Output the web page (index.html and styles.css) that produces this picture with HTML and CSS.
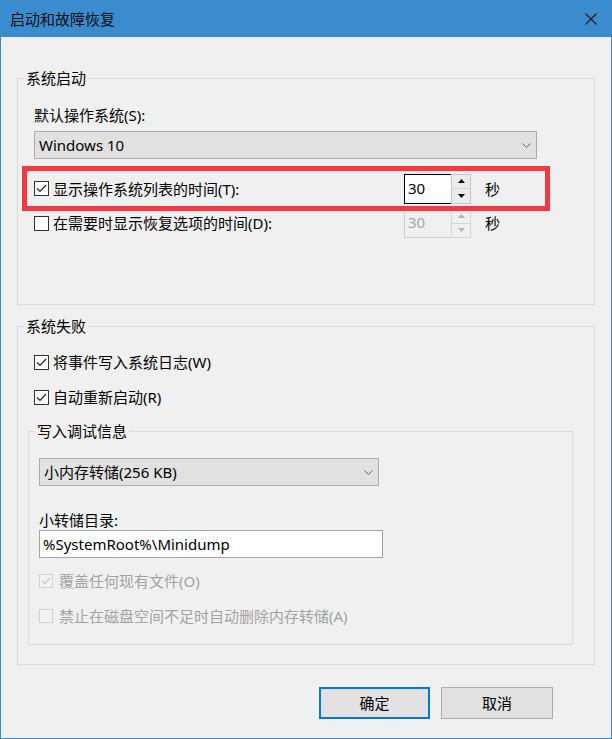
FILE: index.html
```html
<!DOCTYPE html>
<html lang="zh-CN">
<head>
<meta charset="utf-8">
<title>启动和故障恢复</title>
<link rel="stylesheet" href="styles.css">
</head>
<body>
<div class="window">
  <div class="titlebar">
    <span class="title">启动和故障恢复</span>
    <svg class="close" width="12" height="12" viewBox="0 0 12 12"><path d="M0.5 0.5 L11.5 11.5 M11.5 0.5 L0.5 11.5" stroke="#1b1b1b" stroke-width="1.1" fill="none"/></svg>
  </div>
  <div class="content">
    <fieldset class="group g1">
      <legend>系统启动</legend>
      <div class="g1-body">
        <div class="field-label">默认操作系统(S):</div>
        <div class="select os-select">
          <span>Windows 10</span>
          <svg class="chev" width="9" height="5" viewBox="0 0 9 5"><path d="M0.5 0.5 L4.5 4.5 L8.5 0.5" stroke="#606060" stroke-width="1" fill="none"/></svg>
        </div>
        <div class="timers">
          <div class="timer-row highlight">
            <div class="check">
              <span class="box"><svg width="13" height="13" viewBox="0 0 13 13"><path d="M2 6.5 L5 9.5 L11 3" stroke="#222" stroke-width="1.2" fill="none"/></svg></span>
              <span>显示操作系统列表的时间(T):</span>
            </div>
            <div class="spin focused">
              <span class="spin-value">30</span>
              <div class="spin-btns">
                <span class="spin-btn"><svg width="7" height="4" viewBox="0 0 7 4"><path d="M0 4 L3.5 0 L7 4 Z" fill="#000"/></svg></span>
                <span class="spin-btn"><svg width="7" height="4" viewBox="0 0 7 4"><path d="M0 0 L3.5 4 L7 0 Z" fill="#000"/></svg></span>
              </div>
            </div>
            <span class="unit">秒</span>
          </div>
          <div class="timer-row second">
            <div class="check">
              <span class="box"></span>
              <span>在需要时显示恢复选项的时间(D):</span>
            </div>
            <div class="spin disabled">
              <span class="spin-value">30</span>
              <div class="spin-btns">
                <span class="spin-btn"><svg width="7" height="4" viewBox="0 0 7 4"><path d="M0 4 L3.5 0 L7 4 Z" fill="#b4b4b4"/></svg></span>
                <span class="spin-btn"><svg width="7" height="4" viewBox="0 0 7 4"><path d="M0 0 L3.5 4 L7 0 Z" fill="#b4b4b4"/></svg></span>
              </div>
            </div>
            <span class="unit">秒</span>
          </div>
        </div>
      </div>
    </fieldset>

    <fieldset class="group g2">
      <legend>系统失败</legend>
      <div class="g2-body">
        <div class="check row-a">
          <span class="box"><svg width="13" height="13" viewBox="0 0 13 13"><path d="M2 6.5 L5 9.5 L11 3" stroke="#222" stroke-width="1.2" fill="none"/></svg></span>
          <span>将事件写入系统日志(W)</span>
        </div>
        <div class="check row-b">
          <span class="box"><svg width="13" height="13" viewBox="0 0 13 13"><path d="M2 6.5 L5 9.5 L11 3" stroke="#222" stroke-width="1.2" fill="none"/></svg></span>
          <span>自动重新启动(R)</span>
        </div>
        <fieldset class="group g3">
          <legend>写入调试信息</legend>
          <div class="g3-body">
            <div class="select dump-select">
              <span>小内存转储(256 KB)</span>
              <svg class="chev" width="9" height="5" viewBox="0 0 9 5"><path d="M0.5 0.5 L4.5 4.5 L8.5 0.5" stroke="#606060" stroke-width="1" fill="none"/></svg>
            </div>
            <div class="dir-label">小转储目录:</div>
            <div class="textbox">%SystemRoot%\Minidump</div>
            <div class="check disabled row-c">
              <span class="box"><svg width="12" height="12" viewBox="0 0 12 12"><path d="M2 6 L4.7 8.7 L10 3" stroke="#c4c4c4" stroke-width="1.2" fill="none"/></svg></span>
              <span>覆盖任何现有文件(O)</span>
            </div>
            <div class="check disabled row-d">
              <span class="box"></span>
              <span>禁止在磁盘空间不足时自动删除内存转储(A)</span>
            </div>
          </div>
        </fieldset>
      </div>
    </fieldset>

    <div class="buttons">
      <div class="btn default">确定</div>
      <div class="btn cancel">取消</div>
    </div>
  </div>
</div>
</body>
</html>
```

FILE: styles.css
```css
* { box-sizing: border-box; }
html, body { margin: 0; padding: 0; }
body {
  width: 612px;
  height: 739px;
  background: #f0f0f0;
  font-family: "Noto Sans", "Noto Sans CJK SC", sans-serif;
  font-size: 15px;
  color: #000;
  overflow: hidden;
}
.window {
  width: 612px;
  height: 739px;
  border: 1px solid #3b8bcf;
  border-top: none;
  background: #f0f0f0;
}
.titlebar {
  height: 37px;
  background: #3b8bcf;
  display: flex;
  align-items: center;
  justify-content: space-between;
  padding: 0 14px 0 9px;
}
.title {
  font-size: 15px;
  line-height: 20px;
  color: #0f0f0f;
}
.close { display: block; }

.content {
  padding: 31px 0 0 16px;
}

.group {
  margin: 0;
  padding: 0;
  border: 1px solid #dcdcdc;
  min-inline-size: 0;
}
.group > legend {
  margin-left: 6px;
  padding: 0 2px;
  line-height: 20px;
  font-size: 15px;
}
.g1 { width: 578px; }
.g1-body { padding: 17px 0 66px 16px; }

.field-label { line-height: 20px; }

.select {
  height: 28px;
  background: #e1e1e1;
  border: 1px solid #adadad;
  display: flex;
  align-items: center;
  justify-content: space-between;
  padding: 0 5px 0 4px;
  line-height: 20px;
}
.os-select { margin-top: 6px; width: 503px; }
.chev { display: block; }

.timers {
  margin-top: 12px;
  margin-left: -7px;
  width: 518px;
}
.timer-row {
  display: grid;
  grid-template-columns: 370px 67px auto;
  align-items: center;
  padding-left: 7px;
  height: 30px;
}
.timer-row.highlight {
  height: 35px;
  outline: 5px solid #f23a40;
  position: relative;
  z-index: 1;
}
.timer-row.second { margin-top: 2px; }

.check {
  display: flex;
  align-items: center;
  gap: 4px;
  line-height: 20px;
}
.box {
  width: 15px;
  height: 15px;
  border: 1px solid #333;
  background: #fff;
  display: flex;
  align-items: center;
  justify-content: center;
  flex: none;
}
.box svg { display: block; }

.spin {
  display: flex;
  height: 30px;
  width: 67px;
}
.spin-value {
  flex: 1;
  border: 1px solid #000;
  border-right: none;
  background: #fff;
  padding-left: 3px;
  line-height: 26px;
}
.spin-btns {
  width: 20px;
  border: 1px solid #c6c6c6;
  display: flex;
  flex-direction: column;
  background: #ececec;
}
.spin-btn {
  flex: 1;
  display: flex;
  align-items: center;
  justify-content: center;
}
.spin-btn + .spin-btn { border-top: 1px solid #d6d6d6; }
.spin-btn svg { display: block; }
.spin.disabled .spin-value {
  border-color: #cfcfcf;
  background: #f0f0f0;
  color: #a6a6a6;
}
.spin.disabled .spin-btns {
  border-color: #d6d6d6;
  background: #f0f0f0;
}
.unit { margin-left: 14px; line-height: 20px; }

.g2 { width: 578px; margin-top: 11px; }
.g2-body { padding: 16px 0 19px 16px; }
.row-b { margin-top: 15px; }

.g3 {
  width: 545px;
  margin-top: 14px;
  margin-left: -6px;
}
.g3-body { padding: 17px 0 18px 10px; }
.dump-select { width: 340px; }
.dir-label { margin-top: 26px; line-height: 16px; }
.textbox {
  margin-top: 2px;
  width: 344px;
  height: 28px;
  background: #fff;
  border: 1px solid #a2a2a2;
  padding-left: 3px;
  line-height: 26px;
}
.row-c { margin-top: 13px; }
.row-d { margin-top: 15px; }
.check.disabled { color: #a3a3a3; gap: 6px; }
.check.disabled .box {
  width: 14px;
  height: 14px;
  border-color: #d2d2d2;
  background: #f3f3f3;
}

.buttons {
  margin-top: 22px;
  display: flex;
  justify-content: flex-end;
  gap: 11px;
  padding-right: 58px;
}
.btn {
  height: 32px;
  background: #e1e1e1;
  display: flex;
  align-items: center;
  justify-content: center;
  line-height: 20px;
}
.btn.default { width: 111px; border: 2px solid #0078d7; }
.btn.cancel { width: 112px; border: 1px solid #adadad; }
```
